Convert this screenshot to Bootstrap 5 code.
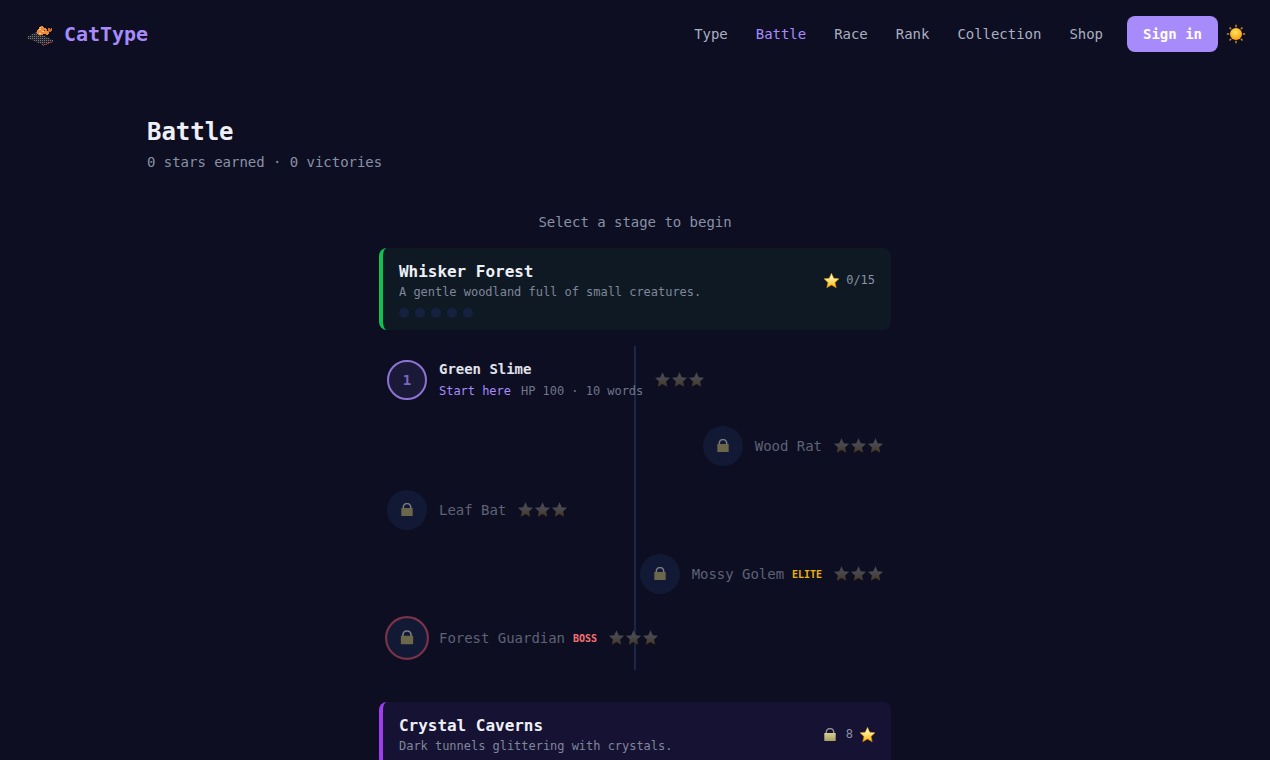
<!DOCTYPE html>
<html lang="en">
<head>
  <meta charset="UTF-8" />
  <meta name="viewport" content="width=device-width, initial-scale=1" />
  <title>CatType - Battle</title>
  <link href="https://cdn.jsdelivr.net/npm/bootstrap@5.3.0/dist/css/bootstrap.min.css" rel="stylesheet" />
  <style>
    body {
      background-color: #0d0e22;
      color: #e8eaf2;
      font-family: "DejaVu Sans Mono", "Liberation Mono", monospace;
      font-size: 14px;
      letter-spacing: -0.03px;
      height: 760px;
      overflow: hidden;
    }

    .top-bar { height: 68px; padding: 0 24px; }
    .brand { color: #a78bfa; font-size: 20px; font-weight: 700; text-decoration: none; }
    .top-links { gap: 28px; margin-right: 24px; }
    .top-links a { color: #a9afc0; text-decoration: none; font-size: 14px; }
    .top-links a.current { color: #a78bfa; }
    .signin-btn {
      background: #a78bfa; color: #fff; border: 0; border-radius: 8px;
      height: 36px; padding: 0 16px; font-size: 14px; font-weight: 700;
    }
    .page-wrap { max-width: 1024px; margin: 0 auto; padding: 0 24px; }
    .page-title { font-size: 24px; font-weight: 700; line-height: 32px; margin: 48px 0 0; color: #eef0f6; }
    .page-sub { color: #8891a5; line-height: 20px; margin: 4px 0 0; }
    .hint { color: #8891a5; line-height: 20px; text-align: center; margin: 40px 0 16px; }
    .battle-map { max-width: 512px; margin: 0 auto; }

    .zone {
      border-left: 4px solid #0ec24f; border-radius: 8px;
      background: #0f1924; padding: 12px 16px;
    }
    .zone-purple { border-left-color: #a23cf0; background: #161233; margin-top: 32px; }
    .zone-name { font-size: 16px; font-weight: 700; line-height: 24px; color: #eef0f6; }
    .zone-desc { font-size: 12px; line-height: 16px; color: #7f8799; }
    .zone-side { font-size: 12px; color: #8891a5; gap: 7px; }
    .zone-side svg { display: block; }
    .zone-lock { margin-right: 3px; }
    .dot-row { gap: 6px; margin-top: 8px; }
    .dot { width: 10px; height: 10px; border-radius: 50%; background: #16203f; }

    .trail { position: relative; padding: 12px 8px; gap: 24px; margin-top: 16px; }
    .trail-line {
      position: absolute; top: 0; bottom: 0; left: 50%; width: 2px;
      margin-left: -1px; background: #1a2747;
    }
    .stop { position: relative; gap: 12px; }
    .stop-tall { height: 44px; }
    .stop-short { height: 40px; }
    .stop-circle {
      width: 40px; height: 40px; border-radius: 50%; flex: none;
      background: #111934;
    }
    .stop-open { border: 2px solid #8e72d6; background: #1a1a38; color: #7f66c4; font-weight: 700; font-size: 14px; }
    .stop-boss { border: 2px solid #7a3348; transform: scale(1.1); }
    .stop-name { line-height: 20px; }
    .stop-name-open { color: #e0e2ea; font-weight: 700; line-height: 18px; margin-bottom: 3px; }
    .stop-name-locked { color: #5e6276; }
    .stop-meta { font-size: 12px; line-height: 20px; color: #6f7688; gap: 10px; }
    .start-tag { color: #a78bfa; }
    .tag-elite { color: #eab308; font-size: 10px; font-weight: 700; }
    .tag-boss { color: #f87171; font-size: 10px; font-weight: 700; }
    .star-set { gap: 2px; margin-bottom: 2px; }
    .star-set svg { width: 15px; height: 15px; display: block; }
    .lock-dim { width: 12px; height: 13px; display: block; }
    .stop-circle .lock-dim { margin-bottom: 1px; }
  </style>
</head>
<body>
  <svg width="0" height="0" class="position-absolute">
    <defs>
      <linearGradient id="starDim" x1="0" y1="0" x2="0" y2="1">
        <stop offset="0.45" stop-color="#48484e" />
        <stop offset="1" stop-color="#46371f" />
      </linearGradient>
      <linearGradient id="starGold" x1="0" y1="0" x2="0" y2="1">
        <stop offset="0.3" stop-color="#fff6a8" />
        <stop offset="1" stop-color="#ffb300" />
      </linearGradient>
      <linearGradient id="lockBody" x1="0" y1="0" x2="0" y2="1">
        <stop offset="0" stop-color="#d6cf96" />
        <stop offset="1" stop-color="#a8a060" />
      </linearGradient>
      <pattern id="keyDots" width="2" height="2" patternUnits="userSpaceOnUse">
        <rect width="1" height="1" fill="#757582" />
      </pattern>
      <symbol id="ico-star" viewBox="1 1 22 21.300">
        <path d="M12 1l3.300 7.300 7.700.8-5.800 5.300 1.700 7.900L12 18.300 5.100 22.300l1.700-7.900L1 9.100l7.700-.8z" />
      </symbol>
      <symbol id="ico-lock" viewBox="0 0 12 13">
        <path d="M2.300 6V4.200a3.700 3.700 0 0 1 7.400 0V6" fill="none" stroke="#8f8f90" stroke-width="1.500" />
        <rect x="0.300" y="5" width="11.400" height="8" rx="0.600" />
      </symbol>
    </defs>
  </svg>

  <nav class="top-bar d-flex align-items-center justify-content-between">
    <a href="#" class="brand d-flex align-items-center gap-2">
      <svg width="32" height="32" viewBox="0 0 32 32" shape-rendering="crispEdges">
        <path d="M2 20l11-7 17 10-11 5z" fill="#24242c" />
        <path d="M2 20l11-7 17 10-11 5z" fill="url(#keyDots)" />
        <path d="M19 27l10-4v1l-10 4z" fill="#8a3a26" />
        <path d="M3 20l16 7v1L3 21z" fill="#121218" />
        <path d="M13 16v-4l2-2 1-2h2l1 1 2 1 2 2v1l2 1v2l-2 1-3-1-3 1z" fill="#ee8a38" />
        <path d="M15 11h2v1h-2zm3 2h2v1h-2zm-3 2h2v1h-2zm1-6h1v1h-1z" fill="#ffdcae" />
        <path d="M24 10h2v1l2-1v2l-2 2h-2z" fill="#c9692a" />
        <path d="M16 8h1v1h-1zm4 4h1v1h-1zm-5 5h2v1h-2z" fill="#7a3a14" />
      </svg>
      CatType
    </a>
    <div class="d-flex align-items-center">
      <div class="top-links d-flex align-items-center">
        <a href="#">Type</a>
        <a href="#" class="current">Battle</a>
        <a href="#">Race</a>
        <a href="#">Rank</a>
        <a href="#">Collection</a>
        <a href="#">Shop</a>
      </div>
      <button class="signin-btn">Sign in</button>
      <svg class="ms-2" width="20" height="20" viewBox="0 0 20 20">
        <defs>
          <radialGradient id="sunFill" cx="0.45" cy="0.35" r="0.7">
            <stop offset="0" stop-color="#ffe45c" />
            <stop offset="1" stop-color="#fb9a0b" />
          </radialGradient>
        </defs>
        <path d="M10 .8v2.400M10 16.800v2.400M.8 10h2.400M16.800 10h2.400M3.500 3.500l1.600 1.600M14.900 14.900l1.600 1.600M3.500 16.500l1.600-1.600M14.900 5.100l1.600-1.600" stroke="#c9851c" stroke-width="1.500" />
        <circle cx="10" cy="10" r="6" fill="url(#sunFill)" />
      </svg>
    </div>
  </nav>

  <main class="page-wrap">
    <h1 class="page-title">Battle</h1>
    <p class="page-sub">0 stars earned · 0 victories</p>
    <p class="hint">Select a stage to begin</p>

    <div class="battle-map">
      <section class="zone">
        <div class="d-flex justify-content-between align-items-center">
          <div>
            <div class="zone-name">Whisker Forest</div>
            <div class="zone-desc">A gentle woodland full of small creatures.</div>
          </div>
          <div class="zone-side d-flex align-items-center">
            <svg width="15" height="15" fill="url(#starGold)" stroke="#e08a00" stroke-width="0.800"><use href="#ico-star" /></svg>
            <span>0/15</span>
          </div>
        </div>
        <div class="dot-row d-flex">
          <span class="dot"></span><span class="dot"></span><span class="dot"></span><span class="dot"></span><span class="dot"></span>
        </div>
      </section>

      <div class="trail d-flex flex-column">
        <div class="trail-line"></div>

        <div class="stop stop-tall d-flex align-items-center">
          <div class="stop-circle stop-open d-flex align-items-center justify-content-center">1</div>
          <div>
            <div class="stop-name-open">Green Slime</div>
            <div class="stop-meta d-flex"><span class="start-tag">Start here</span><span>HP 100 · 10 words</span></div>
          </div>
          <div class="star-set d-flex">
            <svg fill="url(#starDim)"><use href="#ico-star" /></svg>
            <svg fill="url(#starDim)"><use href="#ico-star" /></svg>
            <svg fill="url(#starDim)"><use href="#ico-star" /></svg>
          </div>
        </div>

        <div class="stop stop-short d-flex align-items-center justify-content-end">
          <div class="stop-circle d-flex align-items-center justify-content-center">
            <svg class="lock-dim" fill="#7b7550" opacity="0.85"><use href="#ico-lock" /></svg>
          </div>
          <div class="stop-name stop-name-locked">Wood Rat</div>
          <div class="star-set d-flex">
            <svg fill="url(#starDim)"><use href="#ico-star" /></svg>
            <svg fill="url(#starDim)"><use href="#ico-star" /></svg>
            <svg fill="url(#starDim)"><use href="#ico-star" /></svg>
          </div>
        </div>

        <div class="stop stop-short d-flex align-items-center">
          <div class="stop-circle d-flex align-items-center justify-content-center">
            <svg class="lock-dim" fill="#7b7550" opacity="0.85"><use href="#ico-lock" /></svg>
          </div>
          <div class="stop-name stop-name-locked">Leaf Bat</div>
          <div class="star-set d-flex">
            <svg fill="url(#starDim)"><use href="#ico-star" /></svg>
            <svg fill="url(#starDim)"><use href="#ico-star" /></svg>
            <svg fill="url(#starDim)"><use href="#ico-star" /></svg>
          </div>
        </div>

        <div class="stop stop-short d-flex align-items-center justify-content-end">
          <div class="stop-circle d-flex align-items-center justify-content-center">
            <svg class="lock-dim" fill="#7b7550" opacity="0.85"><use href="#ico-lock" /></svg>
          </div>
          <div class="d-flex align-items-center gap-2">
            <span class="stop-name stop-name-locked">Mossy Golem</span>
            <span class="tag-elite">ELITE</span>
          </div>
          <div class="star-set d-flex">
            <svg fill="url(#starDim)"><use href="#ico-star" /></svg>
            <svg fill="url(#starDim)"><use href="#ico-star" /></svg>
            <svg fill="url(#starDim)"><use href="#ico-star" /></svg>
          </div>
        </div>

        <div class="stop stop-short d-flex align-items-center">
          <div class="stop-circle stop-boss d-flex align-items-center justify-content-center">
            <svg class="lock-dim" fill="#7b7550" opacity="0.85"><use href="#ico-lock" /></svg>
          </div>
          <div class="d-flex align-items-center gap-2">
            <span class="stop-name stop-name-locked">Forest Guardian</span>
            <span class="tag-boss">BOSS</span>
          </div>
          <div class="star-set d-flex">
            <svg fill="url(#starDim)"><use href="#ico-star" /></svg>
            <svg fill="url(#starDim)"><use href="#ico-star" /></svg>
            <svg fill="url(#starDim)"><use href="#ico-star" /></svg>
          </div>
        </div>
      </div>

      <section class="zone zone-purple">
        <div class="d-flex justify-content-between align-items-center">
          <div>
            <div class="zone-name">Crystal Caverns</div>
            <div class="zone-desc">Dark tunnels glittering with crystals.</div>
          </div>
          <div class="zone-side d-flex align-items-center">
            <svg class="lock-dim zone-lock" fill="url(#lockBody)"><use href="#ico-lock" /></svg>
            <span>8</span>
            <svg width="15" height="15" fill="url(#starGold)" stroke="#e08a00" stroke-width="0.800"><use href="#ico-star" /></svg>
          </div>
        </div>
      </section>
    </div>
  </main>

  <script src="https://cdn.jsdelivr.net/npm/bootstrap@5.3.0/dist/js/bootstrap.bundle.min.js"></script>
</body>
</html>
